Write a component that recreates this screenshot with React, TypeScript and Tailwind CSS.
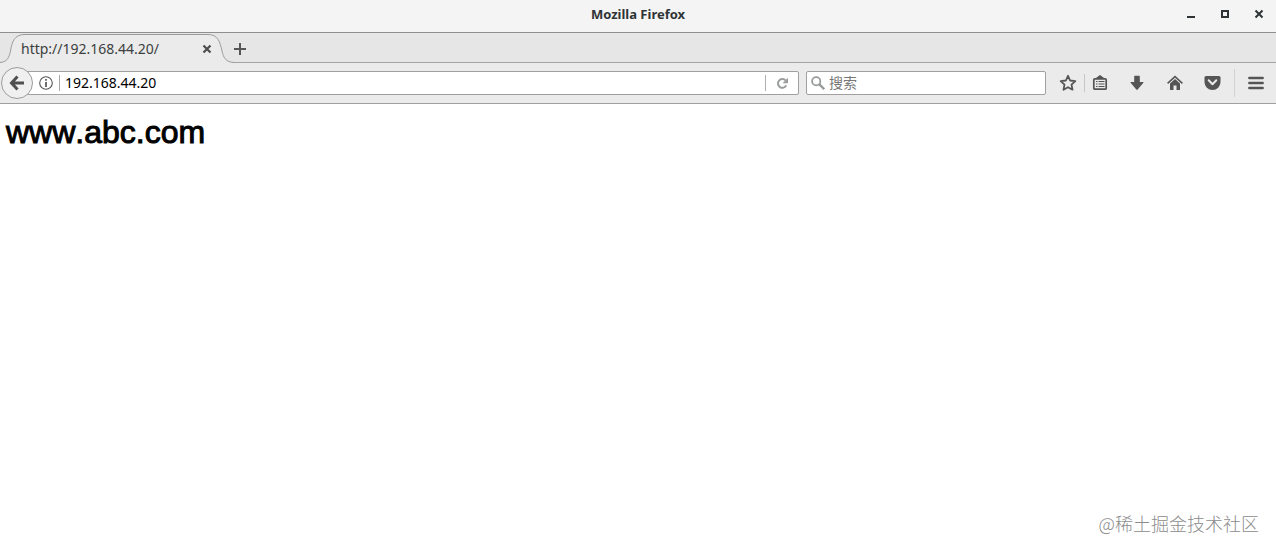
import type { ReactNode } from 'react';

interface IconButtonProps {
  label: string;
  className?: string;
  children: ReactNode;
}

function IconButton({ label, className = 'w-[38px]', children }: IconButtonProps) {
  return (
    <button type="button" aria-label={label} className={`flex h-7 shrink-0 items-center justify-center text-[#555555] ${className}`}>
      {children}
    </button>
  );
}

function TitleBar() {
  return (
    <header className="grid h-[33px] grid-cols-[1fr_auto_1fr] items-start border-b border-[#8f8f8f] bg-[#f4f4f4]">
      <h1 className="col-start-2 text-[13px] leading-7 font-bold text-[#2e3436]">Mozilla Firefox</h1>
      <div className="flex justify-end">
        <IconButton label="Minimize" className="w-[34px]">
          <svg width="10" height="10" viewBox="0 0 10 10" fill="#2e3436">
            <path d="M1 7h8v2H1z" />
          </svg>
        </IconButton>
        <IconButton label="Maximize" className="w-[34px]">
          <svg width="10" height="10" viewBox="0 0 10 10" fill="none" stroke="#2e3436" strokeWidth="2">
            <path d="M2 2h6v6H2z" />
          </svg>
        </IconButton>
        <IconButton label="Close window" className="w-[34px]">
          <svg width="10" height="10" viewBox="0 0 10 10" fill="none" stroke="#2e3436" strokeWidth="2">
            <path d="M1.5 1.5l7 7M8.5 1.5l-7 7" />
          </svg>
        </IconButton>
      </div>
    </header>
  );
}

function TabStrip() {
  return (
    <nav aria-label="Tabs" className="flex h-[30px] items-end border-b border-[#a3a3a3] bg-[#e6e6e6]">
      <div className="relative flex h-7 w-[232px] shrink-0 items-center justify-between pt-0.5 pr-5 pl-[21px]">
        <svg className="absolute top-0 left-0" width="234" height="29" viewBox="0 0 234 29">
          <path
            d="M0 28.5C7 28 9 24 10.5 17C12 8 14 .5 25 .5H208C218 .5 220 8 222 17C223.5 24 226 28 234 28.5V29H0Z"
            fill="#ebebeb"
          />
          <path
            d="M0 28.5C7 28 9 24 10.5 17C12 8 14 .5 25 .5H208C218 .5 220 8 222 17C223.5 24 226 28 234 28.5"
            fill="none"
            stroke="#9c9c9c"
          />
        </svg>
        <a href="#page" className="relative text-sm leading-5 text-[#3b3f40]">http://192.168.44.20/</a>
        <button type="button" aria-label="Close tab" className="relative">
          <svg width="10" height="10" viewBox="0 0 10 10" fill="none" stroke="#4d4d4d" strokeWidth="2.2">
            <path d="M1.5 1.5l7 7M8.5 1.5l-7 7" />
          </svg>
        </button>
      </div>
      <IconButton label="New tab" className="w-4 pt-0.5">
        <svg width="14" height="14" viewBox="0 0 14 14" fill="none" stroke="currentColor" strokeWidth="2">
          <path d="M7 1v12M1 7h12" />
        </svg>
      </IconButton>
    </nav>
  );
}

function AddressBar() {
  return (
    <div className="flex min-w-0 flex-1 items-center">
      <button
        type="button"
        aria-label="Back"
        className="z-10 flex size-8 shrink-0 items-center justify-center rounded-full border border-[#9c9c9c] bg-[#f0f0f0]"
      >
        <svg width="16" height="16" viewBox="0 0 16 16" fill="none" stroke="#505050" strokeWidth="3">
          <path d="M8.5 1.5L2.5 8l6 6.5M3 8h12" />
        </svg>
      </button>
      <div className="-ml-4 flex h-6 min-w-0 flex-1 items-center rounded-xs border border-[#a0a0a0] bg-white pl-[21px]">
        <button type="button" aria-label="Site information" className="shrink-0">
          <svg width="14" height="14" viewBox="0 0 14 14" fill="none" stroke="#555555">
            <circle cx="7" cy="7" r="6.3" strokeWidth="1.1" />
            <path d="M7 6v5M7 3v1.8" strokeWidth="1.7" />
          </svg>
        </button>
        <div className="ml-1.5 flex h-4 min-w-0 flex-1 items-center border-l border-[#a8a8a8] pl-[5px]">
          <input
            type="text"
            aria-label="Address"
            defaultValue="192.168.44.20"
            className="h-[22px] w-full min-w-0 text-sm leading-[22px] text-black outline-none"
          />
        </div>
        <button type="button" aria-label="Reload" className="flex h-4 w-[33px] shrink-0 items-center justify-center border-l border-[#b0b0b0]">
          <svg width="13" height="13" viewBox="0 0 13 13">
            <path d="M10.3 8.4A4.4 4.4 0 1 1 9.6 3.4" fill="none" stroke="#9b9d9d" strokeWidth="2" />
            <path d="M12 0.8V6.3H6.5Z" fill="#9b9d9d" />
          </svg>
        </button>
      </div>
    </div>
  );
}

function SearchBox() {
  return (
    <label className="ml-[7px] flex h-6 w-[240px] shrink-0 items-center rounded-xs border border-[#a0a0a0] bg-white pl-1">
      <svg className="shrink-0" width="14" height="14" viewBox="0 0 14 14" fill="none" stroke="#999c9c">
        <circle cx="5.2" cy="5.2" r="4.1" strokeWidth="1.8" />
        <path d="M8.2 8.2l5 5" strokeWidth="2.4" />
      </svg>
      <input
        type="text"
        aria-label="搜索"
        placeholder="搜索"
        className="ml-1 h-[22px] w-full min-w-0 pb-0.5 text-sm leading-5 outline-none placeholder:text-[#777777]"
      />
    </label>
  );
}

function NavBar() {
  return (
    <div className="flex h-[41px] items-center border-b border-[#a0a0a0] bg-[#ebebeb] pl-px">
      <AddressBar />
      <SearchBox />
      <div className="ml-1.5 flex shrink-0 items-center">
        <IconButton label="Bookmark this page" className="w-8">
          <svg width="18" height="18" viewBox="0 0 18 18" fill="none" stroke="currentColor" strokeWidth="1.8" strokeLinejoin="round">
            <path d="M9 1.8l2.1 4.7 5.2.6-3.8 3.5 1 5.1L9 13.2l-4.5 2.5 1-5.1L1.7 7.1l5.2-.6z" />
          </svg>
        </IconButton>
        <div className="h-[18px] w-px bg-[#c6c6c6]" />
        <IconButton label="Show bookmarks" className="w-[30px]">
          <svg width="16" height="16" viewBox="0 0 16 16" fill="none" stroke="currentColor">
            <rect x="1.8" y="3.8" width="12.4" height="10.4" rx="1" strokeWidth="1.7" />
            <path d="M4 3.5L8 .5l4 3z" fill="currentColor" />
            <path d="M4 6.5h1.5M6.5 6.5h6M4 9h1.5M6.5 9h6M4 11.5h1.5M6.5 11.5h6" strokeWidth="1.1" />
          </svg>
        </IconButton>
        <IconButton label="Downloads" className="w-[44px]">
          <svg width="16" height="16" viewBox="0 0 16 16" fill="currentColor">
            <path d="M5.2 1.5q0-.7.7-.7h4.2q.7 0 .7.7V7H14q1 0 .4.8L8.7 14.6q-.7.7-1.4 0L1.6 7.8Q1 7 2 7h3.2z" />
          </svg>
        </IconButton>
        <IconButton label="Home" className="w-8">
          <svg width="16" height="16" viewBox="0 0 16 16" fill="none" stroke="currentColor">
            <path d="M.6 8.4L8 1.6l7.4 6.8" strokeWidth="1.5" />
            <path d="M3 8.6L8 4l5 4.6V15H9.5v-4.5h-3V15H3z" fill="currentColor" stroke="none" />
          </svg>
        </IconButton>
        <IconButton label="Save to Pocket" className="w-[43px]">
          <svg width="17" height="16" viewBox="0 0 17 16">
            <path d="M2 1h13q1.5 0 1.5 1.5V7a8 8 0 0 1-16 0V2.5Q.5 1 2 1z" fill="currentColor" />
            <path d="M4.7 5.3l3.8 3.9 3.8-3.9" fill="none" stroke="#ebebeb" strokeWidth="2" strokeLinecap="round" strokeLinejoin="round" />
          </svg>
        </IconButton>
        <div className="h-[28px] w-px bg-[#d2d2d2]" />
        <IconButton label="Open menu" className="w-[41px] pl-px">
          <svg width="16" height="14" viewBox="0 0 16 14" fill="none" stroke="currentColor" strokeWidth="2.6" strokeLinecap="round">
            <path d="M1.4 2h13.2M1.4 7h13.2M1.4 12h13.2" />
          </svg>
        </IconButton>
      </div>
    </div>
  );
}

export default function App() {
  return (
    <div className="flex min-h-screen flex-col bg-white font-['Noto_Sans','Noto_Sans_CJK_SC',sans-serif]">
      <TitleBar />
      <TabStrip />
      <NavBar />
      <main id="page" className="flex flex-1 flex-col justify-between">
        {/* regular weight thickened with a stroke, like a synthesised bold */}
        <h2 className="px-1.5 pt-2.5 font-['Liberation_Sans',sans-serif] text-[32px] leading-9 font-normal text-black [-webkit-text-stroke:1px_black] [font-kerning:none]">
          www.abc.com
        </h2>
        <p className="self-end pr-[17px] pb-[17px] font-['Noto_Sans_CJK_SC',sans-serif] text-[18px] leading-6 font-light text-[#8c8c8c]">
          @稀土掘金技术社区
        </p>
      </main>
    </div>
  );
}
